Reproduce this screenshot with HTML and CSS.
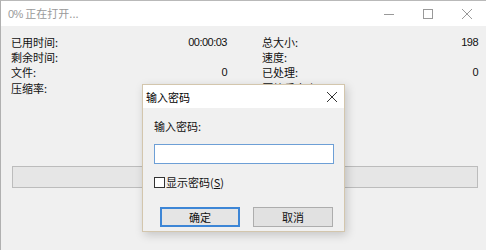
FILE: index.html
```html
<!DOCTYPE html>
<html lang="zh-CN">
<head>
<meta charset="utf-8">
<link rel="stylesheet" href="styles.css">
</head>
<body>
<div class="window">
  <div class="titlebar">
    <span class="title"><span class="num">0%</span> 正在打开...</span>
    <div class="controls">
      <span class="ctl"><svg width="10" height="10" viewBox="0 0 10 10"><path d="M0 5.5H10" stroke="#999" stroke-width="1"/></svg></span>
      <span class="ctl"><svg width="10" height="10" viewBox="0 0 10 10"><rect x="0.5" y="0.5" width="9" height="9" fill="none" stroke="#999" stroke-width="1"/></svg></span>
      <span class="ctl"><svg width="10" height="10" viewBox="0 0 10 10"><path d="M0 0L10 10M10 0L0 10" stroke="#999" stroke-width="1"/></svg></span>
    </div>
  </div>
  <div class="content">
    <div class="stats">
      <div class="col">
        <div class="row"><span>已用时间:</span><span class="num">00:00:03</span></div>
        <div class="row"><span>剩余时间:</span><span></span></div>
        <div class="row"><span>文件:</span><span class="num">0</span></div>
        <div class="row"><span>压缩率:</span><span></span></div>
      </div>
      <div class="col">
        <div class="row"><span>总大小:</span><span class="num">198</span></div>
        <div class="row"><span>速度:</span><span></span></div>
        <div class="row"><span>已处理:</span><span class="num">0</span></div>
        <div class="row"><span>压缩后大小:</span><span></span></div>
      </div>
    </div>
    <div class="progress"></div>
  </div>

  <div class="dialog">
    <div class="dlg-title">
      <span>输入密码</span>
      <svg class="dlg-close" width="10" height="10" viewBox="0 0 10 10"><path d="M0 0L10 10M10 0L0 10" stroke="#333" stroke-width="1"/></svg>
    </div>
    <div class="dlg-body">
      <div class="dlg-label">输入密码:</div>
      <div class="dlg-input"></div>
      <label class="dlg-check"><span class="box"></span><span>显示密码(<u>S</u>)</span></label>
      <div class="dlg-buttons">
        <span class="btn btn-default">确定</span>
        <span class="btn">取消</span>
      </div>
    </div>
  </div>
</div>
</body>
</html>
```

FILE: styles.css
```css
html, body {
  margin: 0;
  padding: 0;
  background: #f0f0f0;
}
body {
  font-family: "Noto Sans CJK SC", "Microsoft YaHei", sans-serif;
  font-size: 11px;
  color: #111;
}
.num {
  font-family: "Liberation Sans", Arial, sans-serif;
  font-size: 11px;
  letter-spacing: -0.5px;
}
.window {
  position: relative;
  width: 486px;
  height: 250px;
  box-sizing: border-box;
  border-top: 1px solid #b9b9b9;
  border-left: 1px solid #b0b0b0;
  background: #f0f0f0;
  overflow: hidden;
}
.titlebar {
  height: 25px;
  background: #fff;
  display: flex;
  align-items: center;
  justify-content: space-between;
}
.title {
  color: #9a9a9a;
  padding-left: 7px;
  line-height: 25px;
}
.controls {
  display: flex;
  height: 25px;
}
.ctl {
  width: 39px;
  display: flex;
  align-items: center;
  justify-content: center;
}
.content {
  padding: 9px 8px 0 10px;
}
.stats {
  display: grid;
  grid-template-columns: 216px 216px;
  column-gap: 35px;
}
.row {
  display: flex;
  justify-content: space-between;
  align-items: center;
  line-height: 15.2px;
  height: 15.2px;
}
.progress {
  margin-top: 70px;
  margin-left: 1px;
  width: 466px;
  height: 22px;
  box-sizing: border-box;
  background: #e6e6e6;
  border: 1px solid #bcbcbc;
}
.dialog {
  position: absolute;
  left: 141px;
  top: 83px;
  width: 203px;
  height: 148px;
  box-sizing: border-box;
  border: 1px solid #d3c6ad;
  background: #f0f0f0;
  box-shadow: 2px 3px 9px rgba(0, 0, 0, 0.18);
}
.dlg-title {
  height: 23px;
  background: #fff;
  display: flex;
  align-items: center;
  justify-content: space-between;
  padding: 0 7px 0 3px;
  color: #000;
}
.dlg-body {
  padding: 10px 9px 0 11px;
}
.dlg-label {
  line-height: 16px;
  height: 16px;
  color: #111;
}
.dlg-input {
  margin-top: 10px;
  width: 180px;
  height: 20px;
  box-sizing: border-box;
  border: 1px solid #6d9fd6;
  background: #fff;
}
.dlg-check {
  margin-top: 11px;
  display: flex;
  align-items: center;
  gap: 1px;
  height: 14px;
  color: #111;
}
.dlg-check u {
  text-decoration: underline;
}
.box {
  width: 11px;
  height: 11px;
  box-sizing: border-box;
  border: 1px solid #333;
  background: #fff;
}
.dlg-buttons {
  margin-top: 18px;
  display: flex;
  gap: 13px;
  padding-left: 6px;
}
.btn {
  width: 80px;
  height: 20px;
  box-sizing: border-box;
  border: 1px solid #adadad;
  background: #e1e1e1;
  display: flex;
  align-items: center;
  justify-content: center;
  color: #111;
}
.btn-default {
  border: 2px solid #3d86d6;
  background: #e5e5e5;
}
```
